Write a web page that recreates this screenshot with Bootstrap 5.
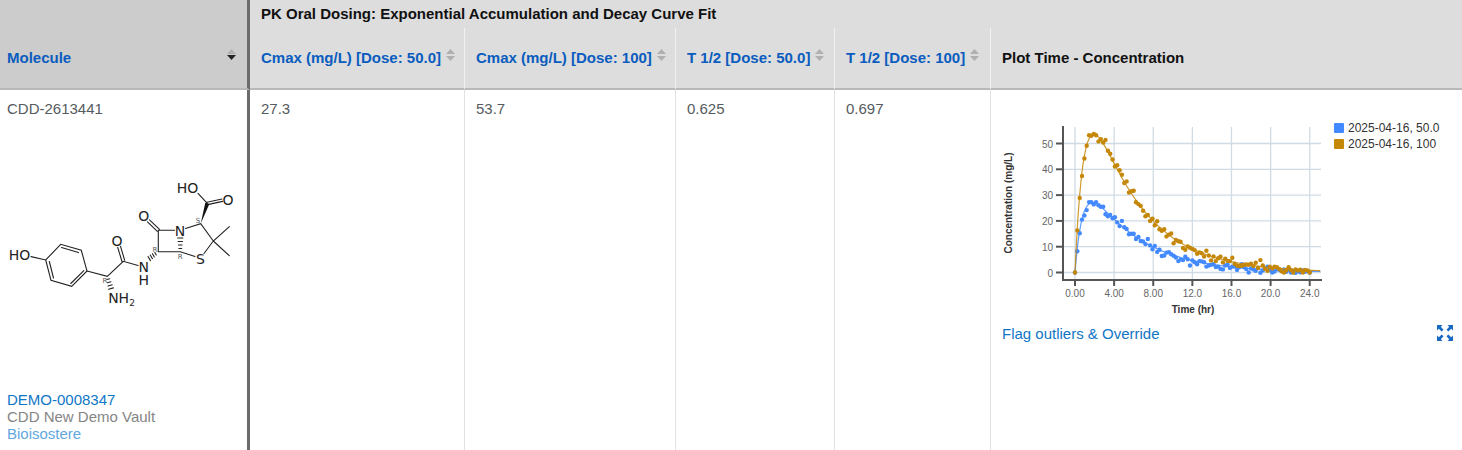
<!DOCTYPE html>
<html lang="en">
<head>
<meta charset="utf-8">
<meta name="viewport" content="width=device-width, initial-scale=1">
<title>PK Oral Dosing</title>
<link href="https://cdn.jsdelivr.net/npm/bootstrap@5.3.0/dist/css/bootstrap.min.css" rel="stylesheet">
<style>
  body { font-family: "Liberation Sans", Arial, sans-serif; font-size: 15px; line-height: 17px; color: #555b60; background: #fff; }
  .results { table-layout: fixed; border-collapse: separate; border-spacing: 0; min-width: 1400px; height: 100vh; }
  .results th { background: #ddd; color: #111; font-weight: 700; padding: 0 11px 2px; white-space: nowrap; vertical-align: middle; }
  .results td { padding: 10px 11px 8px; vertical-align: top; }
  .results .head-group th { height: 28px; }
  .results .head-cols th { height: 62px; }
  .results .head-cols th, .results .mol-head { border-bottom: 2px solid #b9b9b9; }
  .results .head-cols th + th { border-left: 1px solid #f1f1f1; }
  .results td + td + td { border-left: 1px solid #e2e2e2; }
  .results .mol-head { background: #ccc; padding: 28px 11px 2px 7px; }
  .results .mol-head, .results .mol-cell { border-right: 3px solid #6b6b6b; }
  .results .mol-cell { padding: 10px 0 8px 7px; }
  .col-mol { width: 250px; } .col-c50 { width: 214px; } .col-c100 { width: 211px; }
  .col-t50 { width: 159px; } .col-t100 { width: 156px; }
  .sorter { color: #0a5cbf; font-weight: 700; gap: 5px; }
  .sorter svg { width: 9px; height: 12px; }
  .link-main { color: #0f76c6; } .link-soft { color: #62a7df; } .vault { color: #858585; }
  .molecule { width: 236px; height: 274px; }
  .plot { width: 325px; height: 224px; }
  .legend-list { font-size: 12px; line-height: 16px; color: #333; padding-top: 20px; margin-left: 7px; }
  .swatch { width: 10px; height: 10px; border-radius: 1px; }
  .blue { background: #4389ff; } .gold { background: #c58708; }
  .expand svg { width: 18px; height: 18px; }
</style>
</head>
<body>
<table class="results w-100">
  <colgroup><col class="col-mol"><col class="col-c50"><col class="col-c100"><col class="col-t50"><col class="col-t100"><col></colgroup>
  <thead>
    <tr class="head-group">
      <th rowspan="2" class="mol-head" scope="col">
        <button type="button" class="sorter border-0 bg-transparent p-0 w-100 d-flex justify-content-between">Molecule
          <svg viewBox="0 0 9 12" aria-hidden="true"><path d="M0 5L4.500 0L9 5z" fill="#b0b0b0"/><path d="M0 6H9L4.500 11z" fill="#222"/></svg></button>
      </th>
      <th colspan="5" scope="colgroup">PK Oral Dosing: Exponential Accumulation and Decay Curve Fit</th>
    </tr>
    <tr class="head-cols">
      <th scope="col"><button type="button" class="sorter border-0 bg-transparent p-0 d-flex">Cmax (mg/L) [Dose: 50.0] <svg viewBox="0 0 9 12" aria-hidden="true"><path d="M0 5L4.500 0L9 5zM0 7H9L4.500 12z" fill="#b0b0b0"/></svg></button></th>
      <th scope="col"><button type="button" class="sorter border-0 bg-transparent p-0 d-flex">Cmax (mg/L) [Dose: 100] <svg viewBox="0 0 9 12" aria-hidden="true"><path d="M0 5L4.500 0L9 5zM0 7H9L4.500 12z" fill="#b0b0b0"/></svg></button></th>
      <th scope="col"><button type="button" class="sorter border-0 bg-transparent p-0 d-flex">T 1/2 [Dose: 50.0] <svg viewBox="0 0 9 12" aria-hidden="true"><path d="M0 5L4.500 0L9 5zM0 7H9L4.500 12z" fill="#b0b0b0"/></svg></button></th>
      <th scope="col"><button type="button" class="sorter border-0 bg-transparent p-0 d-flex">T 1/2 [Dose: 100] <svg viewBox="0 0 9 12" aria-hidden="true"><path d="M0 5L4.500 0L9 5zM0 7H9L4.500 12z" fill="#b0b0b0"/></svg></button></th>
      <th scope="col">Plot Time - Concentration</th>
    </tr>
  </thead>
  <tbody>
    <tr>
      <td class="mol-cell">
        <div>CDD-2613441</div>
        <svg class="molecule d-block" viewBox="7 117 236 274" role="img" aria-label="Chemical structure">
          <g fill="none" stroke="#222" stroke-width="1.1" stroke-linecap="round">
            <path d="M31 256.600L45.700 260L60.700 244.300L81.300 250.300L87 271L71.700 286.300L51 280.300L45.700 260M61.500 247.500L78.500 252.500M83.800 270.600L70.800 283.500M53.500 278L49.300 261.500"/>
            <path d="M87 271L107.300 276.300L123.300 261.300L138 265.500M122 261.500L117.700 247.300M124.700 260.300L120.500 246.300"/>
            <path d="M158.300 251.700V230.300H174.500M158.300 251.700H180.300L195 256.500M204 253.500L213.300 241L229.300 226.700M213.300 241L229.300 255.700M213.300 241L200.700 223.700L185.500 228.500"/>
            <path d="M157.300 231.300L147.500 221.800M159.500 229.300L149.500 219.800M207.300 203.300L198 193.300M207 202.200L222 199M207.600 204.600L222.600 201.400"/>
            <path d="M178.900 248.500H181.700M178.500 245H182.100M178.100 241.500H182.500M177.700 238H182.900"/>
            <path d="M154.800 252.400L156.300 255M152.500 253.700L154.300 256.900M150.200 255L152.400 258.600M148 256.500L150.500 260.600"/>
            <path d="M106.900 279.500L109.700 278.800M107.500 282.700L110.900 281.700M108 286L112.200 284.800M108.600 289.300L113.400 287.900"/>
          </g>
          <path d="M200.700 223.700L205.300 202.700L209.300 204z" fill="#111"/>
          <g font-family="DejaVu Sans, sans-serif" font-size="14" fill="#222" text-anchor="middle">
            <text x="19.500" y="260">HO</text><text x="117" y="246">O</text><text x="143.700" y="271.500">N</text><text x="143.700" y="284.500">H</text>
            <text x="143.700" y="220.500">O</text><text x="180" y="235.500">N</text><text x="200.500" y="263.800">S</text><text x="187.500" y="193">HO</text><text x="228" y="204.500">O</text>
            <text x="121.500" y="302.500">NH<tspan font-size="9" dy="3">2</tspan></text>
          </g>
          <g font-family="DejaVu Sans, sans-serif" font-size="7" fill="#555" text-anchor="middle">
            <text x="105" y="283">R</text><text x="155" y="252">R</text><text x="180.300" y="258.500">R</text><text x="198" y="223">S</text>
          </g>
        </svg>
        <div><a href="#" class="link-main text-decoration-none">DEMO-0008347</a></div>
        <div class="vault">CDD New Demo Vault</div>
        <div><a href="#" class="link-soft text-decoration-none">Bioisostere</a></div>
      </td>
      <td>27.3</td><td>53.7</td><td>0.625</td><td>0.697</td>
      <td class="pe-2">
        <div class="d-flex">
          <svg class="plot flex-shrink-0" id="plot" viewBox="1 0 325 224" role="img" aria-label="Concentration over time"></svg>
          <ul class="legend-list list-unstyled mb-0 text-nowrap">
            <li class="d-flex align-items-center gap-1"><span class="swatch blue"></span>2025-04-16, 50.0</li>
            <li class="d-flex align-items-center gap-1"><span class="swatch gold"></span>2025-04-16, 100</li>
          </ul>
        </div>
        <div class="d-flex justify-content-between align-items-center">
          <a href="#" class="link-main text-decoration-none">Flag outliers &amp; Override</a>
          <button type="button" class="expand border-0 bg-transparent p-0 d-flex" aria-label="Expand plot"><svg viewBox="0 0 18 18"><g fill="#1769c2"><path id="arrow" d="M1 1H6.500L4.800 2.800L7.500 5.700L5.700 7.500L2.800 4.800L1 6.500z"/><use href="#arrow" transform="rotate(90 9 9)"/><use href="#arrow" transform="rotate(180 9 9)"/><use href="#arrow" transform="rotate(270 9 9)"/></g></svg></button>
        </div>
      </td>
    </tr>
  </tbody>
</table>
<script src="https://cdn.jsdelivr.net/npm/bootstrap@5.3.0/dist/js/bootstrap.bundle.min.js"></script>
<script>
  // Samples are taken every 0.24 h from 0 to 24 h.
  const step = 0.24;
  const series = [
    { color: '#4389ff', A: 44.5, ke: 0.188, ka: 1.25, data: [0,8.2,15.2,20.5,22.1,24.2,27.3,27.2,26.4,27.3,26.1,25.5,25.5,22.6,21.8,22.3,21,21.4,19.4,18,20,17.5,16.9,14.8,15,15,13,13.8,12.2,12,11,13,10.5,9,10.3,8,8.8,6.4,6.6,7.7,7.9,7.1,6.5,5.8,4.4,5,4.8,6.1,5.1,2.7,4.7,4,3.2,4.4,4.3,4,2.3,2.7,3,3.2,2.1,2.3,1.4,1.2,2.7,3,1.8,2.3,2.3,1,2,3.2,2,1.3,0,1.6,1.2,0.7,1.7,-0.1,0.8,1.6,2.3,1,0,0.4,1.4,1,0.6,1.2,0.3,1,0,0.6,-0.1,0.5,0.1,0.8,0.3,0.6,0] },
    { color: '#c58708', A: 95, ke: 0.195, ka: 1.086, data: [0,16.3,28.9,37.4,44.2,49.1,53.2,53,53.7,53.2,50.8,51.7,50.4,51.4,47.2,46,43.8,41.1,41.6,39.6,37.9,34.7,35.3,31,31.5,31.7,27.2,26.5,25.8,23.9,21.8,22.3,20,20.8,18.3,19.9,16.8,16.2,16.8,14,14.7,15.1,11.3,12.6,12.1,11.9,9.5,8.8,10.1,9.6,9.1,8.7,7.3,7.8,7.5,6.2,8.4,6.6,4.7,6.2,4.4,5.5,6.1,3.9,5.3,4.5,4.4,5.7,3.4,2.7,2.5,2.6,3,3.1,3,3.4,2.5,3.8,1.8,4.8,2.7,1.4,0.7,2.2,1.6,2.2,2,1.4,0.5,0,0.8,2,1,0,1.2,0.8,1.1,0,1,0.8,0] }
  ];
  const px = t => 74 + t * 9.78, py = c => 172.5 - c * 2.58;
  let s = '<g stroke="#d0dce5" stroke-width="1.300">';
  for (let t = 0; t <= 24; t += 4) s += `<path d="M${px(t)} 27V179"/>`;
  for (let c = 0; c <= 50; c += 10) s += `<path d="M62 ${py(c)}H320"/>`;
  s += '</g><g stroke="#555" stroke-width="2" fill="none"><path d="M62 26V180H321"/>';
  for (let t = 0; t <= 24; t += 4) s += `<path d="M${px(t)} 180V186"/>`;
  for (let c = 0; c <= 50; c += 10) s += `<path d="M55 ${py(c)}H62"/>`;
  s += '</g><g font-size="10" fill="#666">';
  ['0.00', '4.00', '8.00', '12.0', '16.0', '20.0', '24.0'].forEach((l, i) => s += `<text x="${px(i * 4)}" y="197" text-anchor="middle">${l}</text>`);
  for (let c = 0; c <= 50; c += 10) s += `<text x="52" y="${py(c) + 4}" text-anchor="end">${c}</text>`;
  s += '</g><g font-size="10" font-weight="700" fill="#333" text-anchor="middle"><text x="192" y="213">Time (hr)</text><text transform="translate(11 103) rotate(-90)">Concentration (mg/L)</text></g>';
  for (const r of series) {
    let d = '';
    for (let t = 0; t <= 25.2; t += 0.12) d += `${d ? 'L' : 'M'}${px(t).toFixed(1)} ${py(r.A * (Math.exp(-r.ke * t) - Math.exp(-r.ka * t))).toFixed(1)}`;
    s += `<path d="${d}" fill="none" stroke="${r.color}" stroke-width="1.200" stroke-opacity=".85"/><g fill="${r.color}">`;
    r.data.forEach((c, i) => s += `<circle cx="${px(i * step).toFixed(1)}" cy="${py(c).toFixed(1)}" r="2.200"/>`);
    s += '</g>';
  }
  document.getElementById('plot').innerHTML = s;
</script>
</body>
</html>
